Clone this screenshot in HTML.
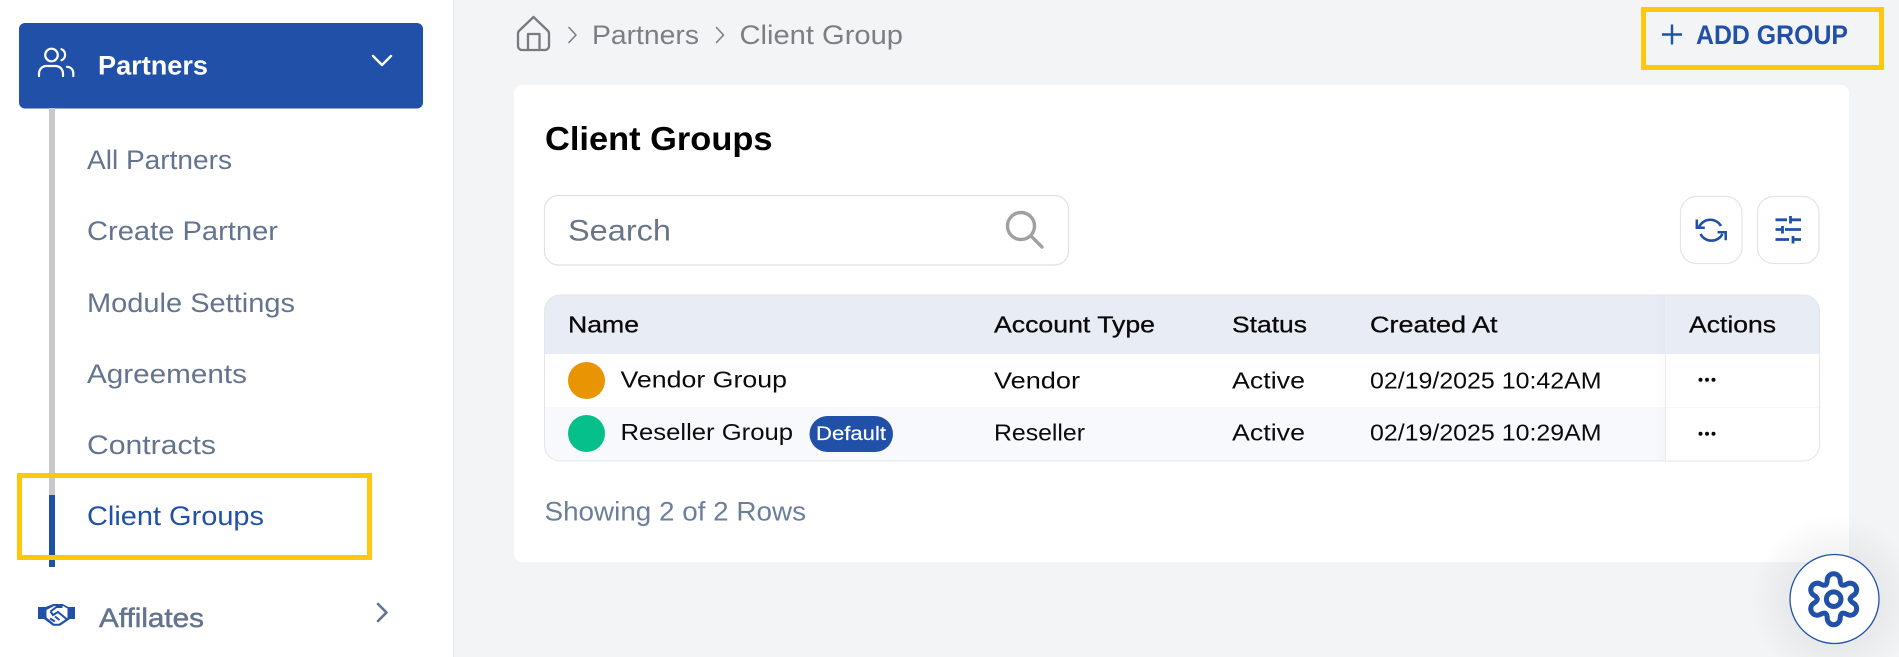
<!DOCTYPE html>
<html lang="en"><head><meta charset="utf-8"><title>Client Groups</title>
<style>
html,body{margin:0;padding:0;background:#f3f4f6;width:1899px;height:657px;overflow:hidden}
svg{display:block}
text{font-family:"Liberation Sans",Arial,sans-serif;white-space:pre}
.nav{font-size:26.5px;fill:#64748f}
.cell{font-size:23.5px;fill:#0a0a0a}
.th{font-size:23.5px;fill:#0a0a0a;stroke:#0a0a0a;stroke-width:.3}
.crumb{font-size:26.5px;fill:#7b7f85}
</style></head><body>
<svg width="1899" height="657" viewBox="0 0 1899 657" xmlns="http://www.w3.org/2000/svg">
<defs>
<clipPath id="tc"><rect x="544.5" y="295" width="1275" height="166" rx="16"/></clipPath>
<radialGradient id="gs"><stop offset=".5" stop-color="#000" stop-opacity=".05"/><stop offset="1" stop-color="#000" stop-opacity="0"/></radialGradient>
<linearGradient id="ss" x1="0" x2="1" y1="0" y2="0"><stop offset="0" stop-color="#000" stop-opacity="0"/><stop offset="1" stop-color="#000" stop-opacity=".02"/></linearGradient>
</defs>
<rect width="1899" height="657" fill="#f3f4f6"/>

<!-- sidebar -->
<rect width="453" height="657" fill="#fff"/>
<rect x="453" width="1" height="657" fill="#e4e6ea"/>
<rect x="19" y="23" width="404" height="85.5" rx="6" fill="#2150a9"/>
<g fill="none" stroke="#fff" stroke-width="2.2" stroke-linecap="round">
<circle cx="51.5" cy="55" r="6.3"/>
<path d="M61.5 49.2a6 6 0 0 1 0 11"/>
<path d="M39 76v-2.5a7.5 7.5 0 0 1 7.5-7.5h9a7.5 7.5 0 0 1 7.5 7.5V76"/>
<path d="M67 66.8a6.3 6.3 0 0 1 6.3 6.3V76"/>
</g>
<text x="98" y="74.5" font-size="26.5" fill="#fff" font-weight="bold" textLength="110" lengthAdjust="spacingAndGlyphs">Partners</text>
<path d="M373 56l9 9 9-9" fill="none" stroke="#fff" stroke-width="2.4" stroke-linecap="round" stroke-linejoin="round"/>
<rect x="49" y="108" width="6" height="387" fill="#c8c8c8"/>
<rect x="49" y="495" width="6" height="72" fill="#2150a9"/>
<text class="nav" x="87" y="169" textLength="145" lengthAdjust="spacingAndGlyphs">All Partners</text>
<text class="nav" x="87" y="240" textLength="191" lengthAdjust="spacingAndGlyphs">Create Partner</text>
<text class="nav" x="87" y="312" textLength="208" lengthAdjust="spacingAndGlyphs">Module Settings</text>
<text class="nav" x="87" y="383" textLength="160" lengthAdjust="spacingAndGlyphs">Agreements</text>
<text class="nav" x="87" y="454" textLength="129" lengthAdjust="spacingAndGlyphs">Contracts</text>
<text class="nav" x="87" y="525" textLength="177" lengthAdjust="spacingAndGlyphs" style="fill:#2150a9">Client Groups</text>
<rect x="19.5" y="475.5" width="350" height="82" fill="none" stroke="#ffc80d" stroke-width="5"/>
<path d="M38 607h7.500l8-3h9l6 3H75v12h-5l-10 6.800h-7L44 619h-6z" fill="#2150a9"/>
<path d="M46.500 610l7.500-4h9l4.500 2.500v9.500L59 623.800h-5L46.500 617.500z" fill="#fff"/>
<path d="M50.500 611.500l6-4.500h6M50.500 611.500l2.500 3.500 5-3 8.500 7M50 618.500l5 3M55 616.500l4.500 3.500" fill="none" stroke="#2150a9" stroke-width="2"/>
<text x="99" y="627" font-size="26.5" fill="#64748f" stroke="#64748f" stroke-width=".5" textLength="105" lengthAdjust="spacingAndGlyphs">Affilates</text>
<path d="M378 604l8.500 8.500-8.500 8.500" fill="none" stroke="#64748f" stroke-width="2.600" stroke-linecap="round" stroke-linejoin="round"/>

<!-- breadcrumb -->
<g fill="none" stroke="#777a7f" stroke-width="2.300" stroke-linejoin="round">
<path d="M518 33.500a4 4 0 0 1 1.400-3L533.500 17l14.100 13.500a4 4 0 0 1 1.400 3V46a4 4 0 0 1-4 4H522a4 4 0 0 1-4-4z"/>
<path d="M528 50V34h11.500v16"/>
</g>
<g fill="none" stroke="#7b7f85" stroke-width="1.600" stroke-linecap="round" stroke-linejoin="round">
<path d="M569 27.500l7 7.500-7 7.500"/><path d="M716.500 27.500l7 7.500-7 7.500"/>
</g>
<text class="crumb" x="592" y="44" textLength="107" lengthAdjust="spacingAndGlyphs">Partners</text>
<text class="crumb" x="739.500" y="44" textLength="163.500" lengthAdjust="spacingAndGlyphs">Client Group</text>

<!-- add group -->
<rect x="1643.500" y="9.500" width="238" height="58" fill="none" stroke="#ffc80d" stroke-width="5"/>
<path d="M1672 24.500v20M1662 34.500h20" stroke="#2150a9" stroke-width="2.400" fill="none"/>
<text x="1696" y="44" font-size="27" font-weight="bold" fill="#2150a9" textLength="152" lengthAdjust="spacingAndGlyphs">ADD GROUP</text>

<!-- card -->
<rect x="514" y="85" width="1335" height="477" rx="8" fill="#fff"/>
<text x="545" y="150" font-size="33" font-weight="bold" fill="#000" textLength="227.500" lengthAdjust="spacingAndGlyphs">Client Groups</text>

<!-- search -->
<rect x="544.500" y="195.500" width="524" height="69.500" rx="14" fill="#fff" stroke="#dfe1e5" stroke-width="1.200"/>
<text x="568" y="240.500" font-size="29.500" fill="#6b7588" textLength="103" lengthAdjust="spacingAndGlyphs">Search</text>
<g fill="none" stroke="#a0a0a0" stroke-width="3.400" stroke-linecap="round">
<circle cx="1021" cy="226" r="13.500"/><path d="M1031 236l11 11"/>
</g>

<!-- tool buttons -->
<rect x="1680.500" y="196.500" width="61.500" height="67" rx="16" fill="#fff" stroke="#e2e4e7" stroke-width="1.200"/>
<rect x="1757.500" y="196.500" width="61.500" height="67" rx="16" fill="#fff" stroke="#e2e4e7" stroke-width="1.200"/>
<g fill="none" stroke="#2150a9" stroke-width="2.500">
<path d="M1699 227A12.400 12.400 0 0 1 1721 226"/>
<path d="M1696.800 219.500v8.200h8"/>
<path d="M1700.500 234A12.400 12.400 0 0 0 1722.500 234"/>
<path d="M1717.500 232.200h8.200v8"/>
</g>
<g fill="none" stroke="#2150a9" stroke-width="2.800">
<path d="M1775.500 219.800H1787M1790.500 219.800H1801M1790.500 216v7.500"/>
<path d="M1775.500 229.500H1781M1785 229.500H1801M1782.500 226v7.500"/>
<path d="M1775.500 239.500H1789M1793 239.500H1801M1793 236v7.500"/>
</g>

<!-- table -->
<g clip-path="url(#tc)">
<rect x="544" y="295" width="1276" height="59" fill="#e8ecf4"/>
<rect x="544" y="354" width="1276" height="53" fill="#fff"/>
<rect x="544" y="407" width="1276" height="54" fill="#f8f9fc"/>
<rect x="1655" y="295" width="10.500" height="166" fill="url(#ss)"/>
<rect x="1665.500" y="295" width="155" height="59" fill="#e8ecf4"/>
<rect x="1665.500" y="354" width="155" height="107" fill="#fff"/>
<rect x="1665" y="295" width="1" height="166" fill="#ebedf1"/>
<rect x="1666" y="407" width="154" height="1" fill="#f6f7f9"/>
</g>
<rect x="544.500" y="295" width="1275" height="166" rx="16" fill="none" stroke="#e3e5e9" stroke-width="1"/>
<text class="th" x="568" y="332.500" textLength="71" lengthAdjust="spacingAndGlyphs">Name</text>
<text class="th" x="994" y="332.500" textLength="161" lengthAdjust="spacingAndGlyphs">Account Type</text>
<text class="th" x="1232" y="332.500" textLength="75" lengthAdjust="spacingAndGlyphs">Status</text>
<text class="th" x="1370" y="332.500" textLength="127.500" lengthAdjust="spacingAndGlyphs">Created At</text>
<text class="th" x="1689" y="332.500" textLength="87" lengthAdjust="spacingAndGlyphs">Actions</text>

<circle cx="586.500" cy="380.500" r="18.500" fill="#e99503"/>
<circle cx="586.500" cy="433.500" r="18.500" fill="#05c08a"/>
<text class="cell" x="620.500" y="387.500" textLength="166.500" lengthAdjust="spacingAndGlyphs">Vendor Group</text>
<text class="cell" x="620.500" y="440" textLength="172.500" lengthAdjust="spacingAndGlyphs">Reseller Group</text>
<rect x="809.500" y="416" width="83.500" height="36" rx="18" fill="#2150a9"/>
<text x="816" y="440" font-size="19" fill="#fff" stroke="#fff" stroke-width=".2" textLength="70" lengthAdjust="spacingAndGlyphs">Default</text>
<text class="cell" x="994" y="388.500" textLength="86" lengthAdjust="spacingAndGlyphs">Vendor</text>
<text class="cell" x="994" y="440.500" textLength="91" lengthAdjust="spacingAndGlyphs">Reseller</text>
<text class="cell" x="1232" y="388.500" textLength="73" lengthAdjust="spacingAndGlyphs">Active</text>
<text class="cell" x="1232" y="440.500" textLength="73" lengthAdjust="spacingAndGlyphs">Active</text>
<text class="cell" x="1370" y="388.500" textLength="231.500" lengthAdjust="spacingAndGlyphs">02/19/2025 10:42AM</text>
<text class="cell" x="1370" y="440.500" textLength="231.500" lengthAdjust="spacingAndGlyphs">02/19/2025 10:29AM</text>
<g fill="#0a0a0a">
<circle cx="1700.500" cy="379.800" r="2"/><circle cx="1707" cy="379.800" r="2"/><circle cx="1713.500" cy="379.800" r="2"/>
<circle cx="1700.500" cy="433.800" r="2"/><circle cx="1707" cy="433.800" r="2"/><circle cx="1713.500" cy="433.800" r="2"/>
</g>
<text x="544.500" y="520.500" font-size="26.500" fill="#6b7f99" textLength="261.500" lengthAdjust="spacingAndGlyphs">Showing 2 of 2 Rows</text>

<!-- gear button -->
<circle cx="1834.500" cy="599" r="85" fill="url(#gs)"/>
<circle cx="1834.500" cy="599" r="44.500" fill="#fff" stroke="#2150a9" stroke-width="1.300"/>
<g transform="translate(1833.700 599.200)" fill="none" stroke="#2150a9" stroke-width="5" stroke-linecap="round" stroke-linejoin="round">
<circle r="7.300"/>
<path d="M-8.200-14.200Q-6.500-15.500-6.500-19a6.500 6.500 0 0 1 13 0Q6.500-15.500 8.200-14.200"/>
<path transform="rotate(60)" d="M-8.200-14.200Q-6.500-15.500-6.500-19a6.500 6.500 0 0 1 13 0Q6.500-15.500 8.200-14.200"/>
<path transform="rotate(120)" d="M-8.200-14.200Q-6.500-15.500-6.500-19a6.500 6.500 0 0 1 13 0Q6.500-15.500 8.200-14.200"/>
<path transform="rotate(180)" d="M-8.200-14.200Q-6.500-15.500-6.500-19a6.500 6.500 0 0 1 13 0Q6.500-15.500 8.200-14.200"/>
<path transform="rotate(240)" d="M-8.200-14.200Q-6.500-15.500-6.500-19a6.500 6.500 0 0 1 13 0Q6.500-15.500 8.200-14.200"/>
<path transform="rotate(300)" d="M-8.200-14.200Q-6.500-15.500-6.500-19a6.500 6.500 0 0 1 13 0Q6.500-15.500 8.200-14.200"/>
</g>
</svg>
</body></html>
